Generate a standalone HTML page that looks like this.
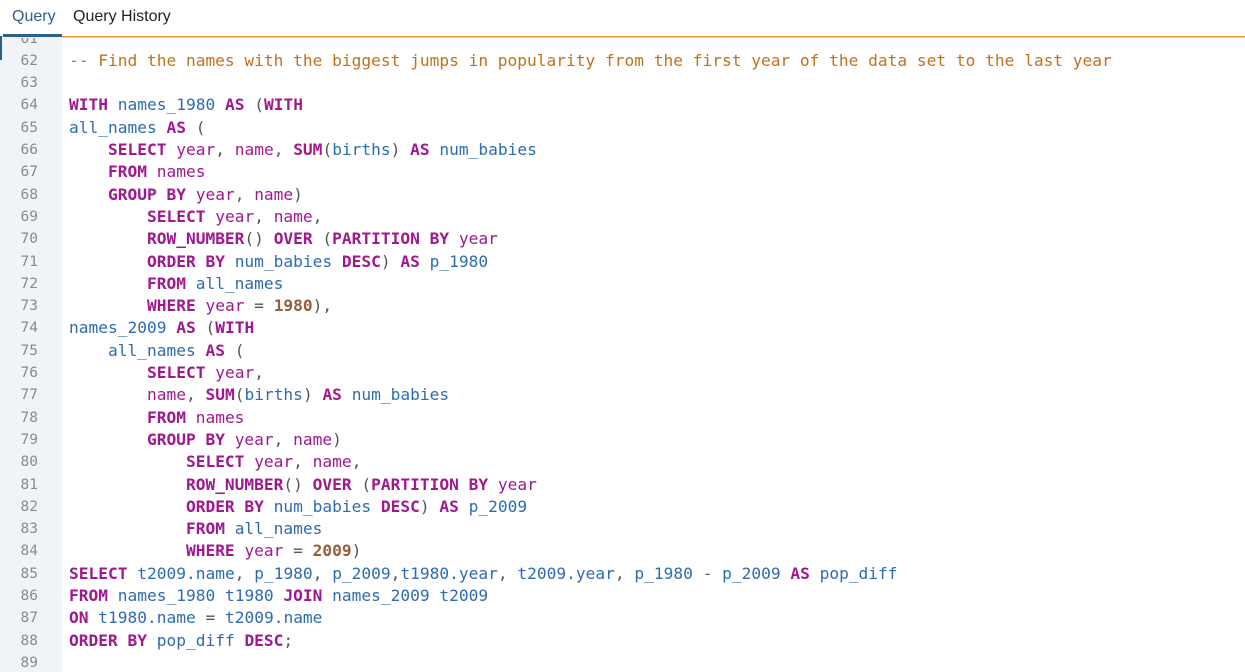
<!DOCTYPE html>
<html><head><meta charset="utf-8"><style>
html,body{margin:0;padding:0;width:1245px;height:672px;overflow:hidden;background:#fff;font-family:"Liberation Sans",sans-serif}
.tabs{position:absolute;top:0;left:0;width:1245px;height:36px;border-bottom:2px solid #cfcfcf;background:#fff}
.tab{position:absolute;top:8px;font-size:16px;color:#222}
.t1{left:12px;color:#2b5f8e}
.t2{left:73px}
.ul{position:absolute;left:3px;top:34px;width:59px;height:3px;background:#2b5f8e}
.orange{position:absolute;left:62px;top:36px;width:1183px;height:1px;background:#e59a3a}
.gutter{position:absolute;left:0;top:37px;width:62px;height:635px;background:#f0f3f7}
.lbar{position:absolute;left:0;top:36px;width:2px;height:24px;background:#2b5f8e}
.code{position:absolute;top:38px;left:0;width:1245px;height:634px;overflow:hidden}
.ln{position:absolute;left:0;height:22.3px;line-height:22.3px;width:1245px;font-family:"DejaVu Sans Mono",monospace;font-size:16.2px;white-space:pre}
.num{position:absolute;left:0;width:38px;text-align:right;color:#8a8a8a;font-size:14.5px}
.tx{position:absolute;left:69px;color:#555}
.k{color:#a0188f;font-weight:bold}
.w{color:#a0188f}
.i{color:#2e6bb0}
.n{color:#93603a;font-weight:bold}
.c{color:#c4701a}
</style></head><body>
<div class="tabs"><span class="tab t1">Query</span><span class="tab t2">Query History</span></div>
<div class="ul"></div>
<div class="gutter"></div>
<div class="code">
<div class="ln" style="top:-10.5px"><span class="num">61</span></div>
<div class="ln" style="top:11.8px"><span class="num">62</span><span class="tx"><span class="c">-- Find the names with the biggest jumps in popularity from the first year of the data set to the last year</span></span></div>
<div class="ln" style="top:34.1px"><span class="num">63</span></div>
<div class="ln" style="top:56.4px"><span class="num">64</span><span class="tx"><span class="k">WITH</span> <span class="i">names_1980</span> <span class="k">AS</span> (<span class="k">WITH</span></span></div>
<div class="ln" style="top:78.7px"><span class="num">65</span><span class="tx"><span class="i">all_names</span> <span class="k">AS</span> (</span></div>
<div class="ln" style="top:101px"><span class="num">66</span><span class="tx">    <span class="k">SELECT</span> <span class="w">year</span>, <span class="w">name</span>, <span class="k">SUM</span>(<span class="i">births</span>) <span class="k">AS</span> <span class="i">num_babies</span></span></div>
<div class="ln" style="top:123.3px"><span class="num">67</span><span class="tx">    <span class="k">FROM</span> <span class="w">names</span></span></div>
<div class="ln" style="top:145.6px"><span class="num">68</span><span class="tx">    <span class="k">GROUP BY</span> <span class="w">year</span>, <span class="w">name</span>)</span></div>
<div class="ln" style="top:167.9px"><span class="num">69</span><span class="tx">        <span class="k">SELECT</span> <span class="w">year</span>, <span class="w">name</span>,</span></div>
<div class="ln" style="top:190.2px"><span class="num">70</span><span class="tx">        <span class="k">ROW_NUMBER</span>() <span class="k">OVER</span> (<span class="k">PARTITION BY</span> <span class="w">year</span></span></div>
<div class="ln" style="top:212.5px"><span class="num">71</span><span class="tx">        <span class="k">ORDER BY</span> <span class="i">num_babies</span> <span class="k">DESC</span>) <span class="k">AS</span> <span class="i">p_1980</span></span></div>
<div class="ln" style="top:234.8px"><span class="num">72</span><span class="tx">        <span class="k">FROM</span> <span class="i">all_names</span></span></div>
<div class="ln" style="top:257.1px"><span class="num">73</span><span class="tx">        <span class="k">WHERE</span> <span class="w">year</span> = <span class="n">1980</span>),</span></div>
<div class="ln" style="top:279.4px"><span class="num">74</span><span class="tx"><span class="i">names_2009</span> <span class="k">AS</span> (<span class="k">WITH</span></span></div>
<div class="ln" style="top:301.7px"><span class="num">75</span><span class="tx">    <span class="i">all_names</span> <span class="k">AS</span> (</span></div>
<div class="ln" style="top:324px"><span class="num">76</span><span class="tx">        <span class="k">SELECT</span> <span class="w">year</span>,</span></div>
<div class="ln" style="top:346.3px"><span class="num">77</span><span class="tx">        <span class="w">name</span>, <span class="k">SUM</span>(<span class="i">births</span>) <span class="k">AS</span> <span class="i">num_babies</span></span></div>
<div class="ln" style="top:368.6px"><span class="num">78</span><span class="tx">        <span class="k">FROM</span> <span class="w">names</span></span></div>
<div class="ln" style="top:390.9px"><span class="num">79</span><span class="tx">        <span class="k">GROUP BY</span> <span class="w">year</span>, <span class="w">name</span>)</span></div>
<div class="ln" style="top:413.2px"><span class="num">80</span><span class="tx">            <span class="k">SELECT</span> <span class="w">year</span>, <span class="w">name</span>,</span></div>
<div class="ln" style="top:435.5px"><span class="num">81</span><span class="tx">            <span class="k">ROW_NUMBER</span>() <span class="k">OVER</span> (<span class="k">PARTITION BY</span> <span class="w">year</span></span></div>
<div class="ln" style="top:457.8px"><span class="num">82</span><span class="tx">            <span class="k">ORDER BY</span> <span class="i">num_babies</span> <span class="k">DESC</span>) <span class="k">AS</span> <span class="i">p_2009</span></span></div>
<div class="ln" style="top:480.1px"><span class="num">83</span><span class="tx">            <span class="k">FROM</span> <span class="i">all_names</span></span></div>
<div class="ln" style="top:502.4px"><span class="num">84</span><span class="tx">            <span class="k">WHERE</span> <span class="w">year</span> = <span class="n">2009</span>)</span></div>
<div class="ln" style="top:524.7px"><span class="num">85</span><span class="tx"><span class="k">SELECT</span> <span class="i">t2009.name</span>, <span class="i">p_1980</span>, <span class="i">p_2009</span>,<span class="i">t1980.year</span>, <span class="i">t2009.year</span>, <span class="i">p_1980</span> - <span class="i">p_2009</span> <span class="k">AS</span> <span class="i">pop_diff</span></span></div>
<div class="ln" style="top:547px"><span class="num">86</span><span class="tx"><span class="k">FROM</span> <span class="i">names_1980</span> <span class="i">t1980</span> <span class="k">JOIN</span> <span class="i">names_2009</span> <span class="i">t2009</span></span></div>
<div class="ln" style="top:569.3px"><span class="num">87</span><span class="tx"><span class="k">ON</span> <span class="i">t1980.name</span> = <span class="i">t2009.name</span></span></div>
<div class="ln" style="top:591.6px"><span class="num">88</span><span class="tx"><span class="k">ORDER BY</span> <span class="i">pop_diff</span> <span class="k">DESC</span>;</span></div>
<div class="ln" style="top:613.9px"><span class="num">89</span></div>
</div>
<div class="orange"></div>
<div class="lbar"></div>
</body></html>
